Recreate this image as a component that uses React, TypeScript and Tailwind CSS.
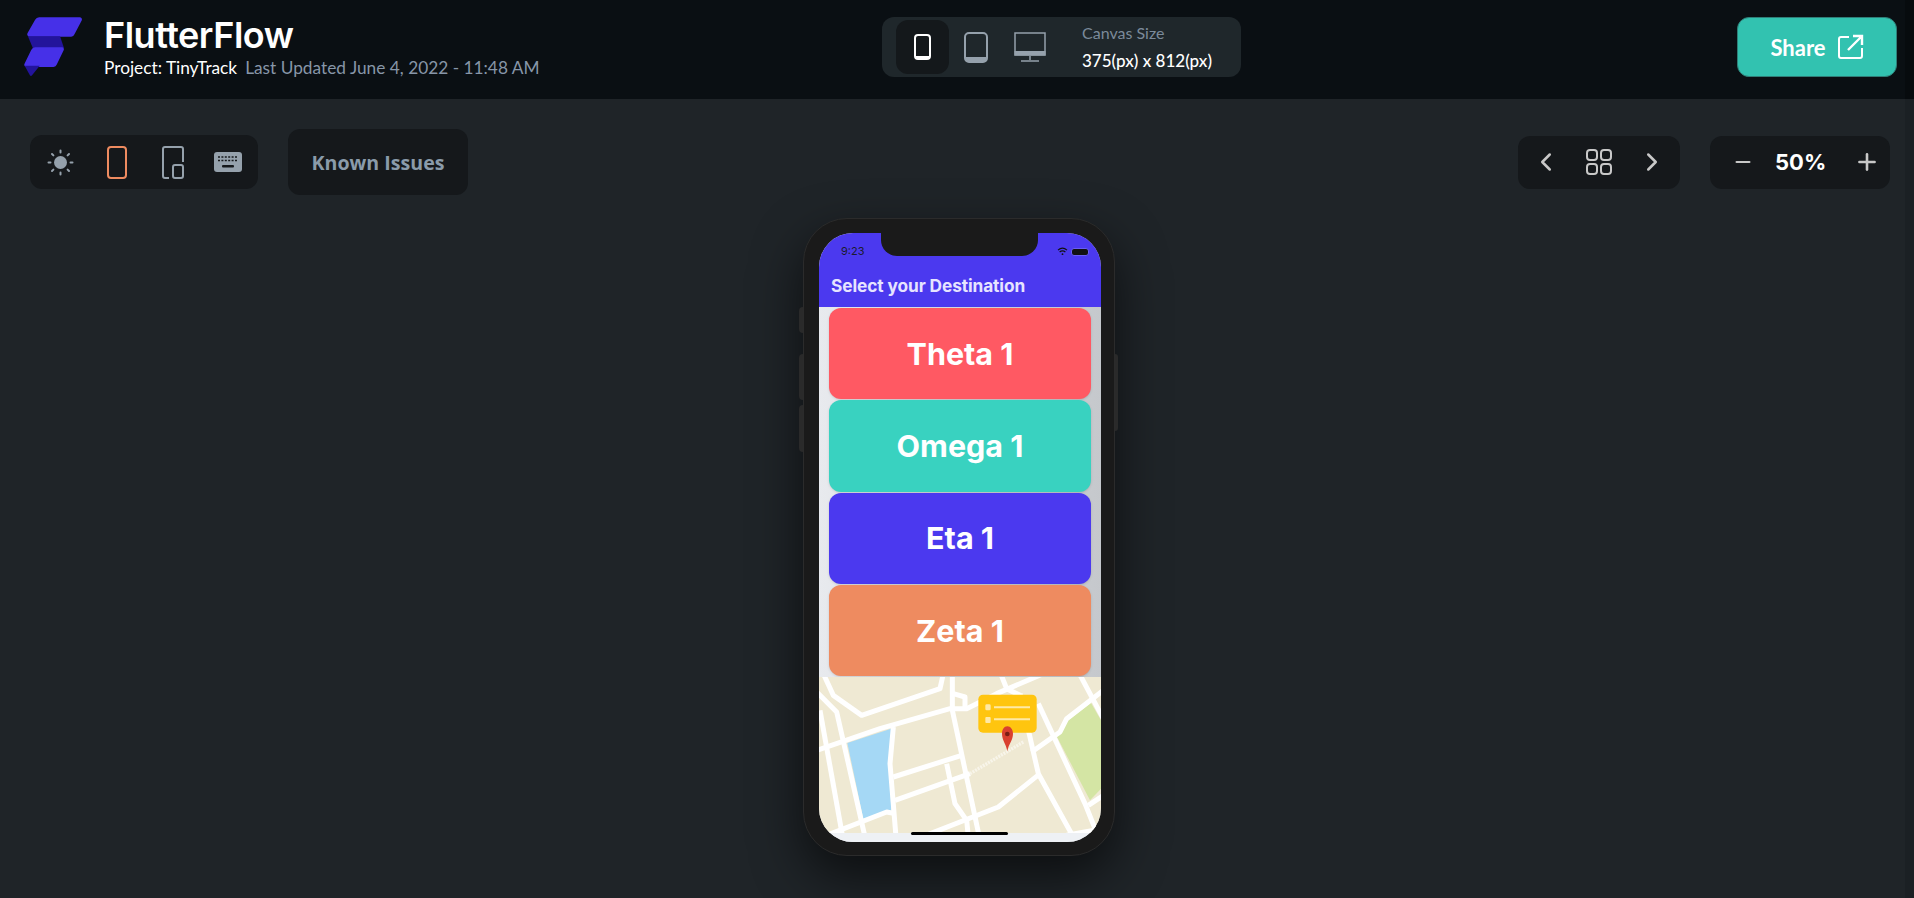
import { ChevronLeft, ChevronRight, Minus, Plus } from 'lucide-react';

const cards = [
  { label: 'Theta 1', bg: 'bg-[#ff5963]' },
  { label: 'Omega 1', bg: 'bg-[#39d2c0]' },
  { label: 'Eta 1', bg: 'bg-[#4b39ef]' },
  { label: 'Zeta 1', bg: 'bg-[#ee8b60]' },
];

// road centre lines, in the coordinates of the map drawing
const roads = [
  'M100 40 L130 105 L215 165 L450 85 L460 40',
  'M80 95 L140 155 L225 530',
  'M90 150 L158 530',
  'M80 270 L270 205 L480 145 L530 145 L620 100 L760 40',
  'M487 40 L487 150 L568 530',
  'M490 100 L525 110 L525 145',
  'M632 40 L650 85 L690 105',
  'M690 100 L745 340 L850 530',
  'M745 130 L885 430 L925 530',
  'M868 40 L940 175',
  'M725 275 L810 215 L830 175 L940 90',
  'M310 350 L515 285',
  'M315 420 L540 340',
  'M470 310 L495 430 L530 480 L535 530',
  'M395 530 L625 440 L750 340',
  'M110 525 L290 455 L315 460',
  'M310 200 L300 310 L318 530',
  'M895 435 L940 405',
  'M830 525 L940 505',
];

function Logo() {
  return (
    <svg width="60" height="62" viewBox="65 45 183 188">
      <path d="M116 48 H238 a7 7 0 0 1 6 10 L222 100 a12 12 0 0 1 -10 8 H86 a8 8 0 0 1 -7 -12 L102 56 a14 14 0 0 1 14 -8 Z" fill="#4630e8" />
      <path d="M80 106 H178 L190 142 H95 Z" fill="#23149c" />
      <path d="M104 140 H184 a6 6 0 0 1 5 9 L168 192 a12 12 0 0 1 -10 8 H76 a7 7 0 0 1 -6 -11 L90 148 a14 14 0 0 1 14 -8 Z" fill="#4630e8" />
      <path d="M70 196 H116 L92 226 a4 4 0 0 1 -6 -1 Z" fill="#23149c" />
    </svg>
  );
}

function MapView() {
  return (
    <svg viewBox="87 50 846 468" className="block h-[156px] w-[282px]">
      <rect x="87" y="50" width="846" height="468" fill="#efe9d3" />
      <path d="M172 248 L310 203 L298 310 L304 450 L220 476 Z" fill="#a5d8f5" />
      <path d="M800 228 L835 180 L903 128 L933 180 L933 385 L900 420 Z" fill="#d4e5a4" />
      {roads.map(d => (
        <path key={d} d={d} fill="none" stroke="#fff" strokeWidth="15" strokeLinejoin="round" />
      ))}
      <path d="M540 340 L700 245" fill="none" stroke="#f8f5ea" strokeWidth="10" strokeDasharray="6 3" />
      <rect x="565" y="103" width="175" height="114" rx="14" fill="#ffc50f" />
      <rect x="586" y="132" width="16" height="18" rx="4" fill="#ffe9a6" />
      <rect x="586" y="170" width="16" height="18" rx="3" fill="#ffe9a6" />
      <path d="M612 141 H720 M612 177 H720" stroke="#ffe9a6" strokeWidth="6" />
      <path d="M652 198 C642 198 636 208 636 220 C636 240 648 250 652 273 C656 250 669 240 669 220 C669 208 662 198 652 198 Z" fill="#d9402f" />
      <circle cx="652" cy="221" r="7" fill="#7a1d14" />
    </svg>
  );
}

function Phone() {
  return (
    <div className="relative ml-[803px] mt-[23px] h-[638px] w-[312px] rounded-[44px] border border-[#2b2b2b] bg-[#1a1a1a] py-[14px] pl-[15px] shadow-[0_20px_50px_rgba(0,0,0,0.6)]">
      <div className="absolute left-[-5px] top-[88px] h-[26px] w-[4px] rounded-l bg-[#2a2a2a]" />
      <div className="absolute left-[-5px] top-[135px] h-[46px] w-[4px] rounded-l bg-[#2a2a2a]" />
      <div className="absolute left-[-5px] top-[186px] h-[47px] w-[4px] rounded-l bg-[#2a2a2a]" />
      <div className="absolute right-[-4px] top-[135px] h-[77px] w-[3px] rounded-r bg-[#2a2a2a]" />

      <div className="relative flex h-[609px] w-[282px] flex-col overflow-hidden rounded-[34px] bg-linear-to-r from-[#e8eaee] to-[#c5c8cc]">
        {/* notch lies over the status bar */}
        <div className="absolute left-[62px] top-0 h-[23px] w-[157px] rounded-b-[16px] bg-[#1a1a1a]" />

        <div className="flex h-[74px] shrink-0 flex-col bg-[#4b39ef] px-[12px]">
          <div className="flex h-[33px] items-center justify-between pl-[10px] pr-0 pt-[4px]">
            <span className="font-['Inter',sans-serif] text-[11px] text-[#1c1c2e]">9:23</span>
            <div className="flex items-center gap-[3px]">
              <svg width="11" height="9" viewBox="0 0 12 10" fill="none" stroke="#111" strokeWidth="1.4">
                <path d="M1 3.5 C4 .8 8 .8 11 3.5 M2.8 5.6 C4.8 4 7.2 4 9.2 5.6" />
                <circle cx="6" cy="8" r="1" fill="#111" stroke="none" />
              </svg>
              <div className="h-[8px] w-[18px] rounded-[3px] border border-[#6a5cf5] bg-[#111]" />
            </div>
          </div>
          <h1 className="mt-[8px] font-['Inter',sans-serif] text-[17.3px] font-bold leading-[24px] tracking-[-0.1px] text-[#e6e4ff]">
            Select your Destination
          </h1>
        </div>

        <div className="flex flex-col gap-[1px] px-[10px] pt-[1px]">
          {cards.map(card => (
            <div
              key={card.label}
              className={`flex h-[91.25px] items-center justify-center rounded-[12px] font-['Inter',sans-serif] text-[30.5px] font-bold text-white shadow-sm ${card.bg}`}
            >
              {card.label}
            </div>
          ))}
        </div>

        <div className="mt-[1px]">
          <MapView />
        </div>
        <div className="flex-1 bg-[#eef1f5]" />
        <div className="absolute bottom-[7px] left-[92px] h-[3px] w-[97px] rounded-full bg-black" />
      </div>
    </div>
  );
}

export default function App() {
  return (
    <div className="flex h-screen overflow-hidden bg-[#1f2428] font-['Lato',sans-serif]">
      <div className="min-w-0 flex-1">
        <header className="flex h-[99px] items-center bg-[#0a0f13] pb-[5px]">
          <div className="flex w-[882px] shrink-0 items-center pl-[23px]">
            <Logo />
            <div className="ml-[21px] flex flex-col">
              <div className="font-['Inter',sans-serif] text-[36px] font-semibold leading-[38px] tracking-[-0.5px] text-white">
                FlutterFlow
              </div>
              <div className="mt-[3px] flex gap-[8px] text-[17.3px] leading-[22px]">
                <span className="text-white">Project: TinyTrack</span>
                <span className="text-[#8796a8]">Last Updated June 4, 2022 - 11:48 AM</span>
              </div>
            </div>
          </div>

          <div className="flex h-[60px] w-[359px] shrink-0 items-center rounded-[12px] bg-[#1f272b] pl-[14px]">
            <div className="flex h-[54px] w-[53px] items-center justify-center rounded-[12px] bg-[#14181b]">
              <div className="h-[26px] w-[17px] rounded-[4px] border-2 border-b-[4px] border-white" />
            </div>
            <div className="ml-[15px] h-[31px] w-[24px] rounded-[5px] border-2 border-b-[6px] border-[#95a1ac]" />
            <svg className="ml-[26px]" width="32" height="30" viewBox="0 0 32 30" fill="none">
              <rect x="1" y="1" width="30" height="22" stroke="#95a1ac" strokeWidth="1.5" />
              <rect x="0.5" y="19" width="31" height="4.5" fill="#95a1ac" />
              <path d="M16 24 V28 M7 29 H25" stroke="#95a1ac" strokeWidth="1.5" />
            </svg>
            <div className="ml-[36px] flex flex-col">
              <span className="text-[16px] leading-[24px] text-[#7b8a9a]">Canvas Size</span>
              <span className="mt-[4px] text-[17px] font-medium leading-[24px] text-white">375(px) x 812(px)</span>
            </div>
          </div>

          <button className="ml-auto mr-[8px] flex h-[60px] w-[160px] items-center justify-center gap-[12px] rounded-[12px] border border-[#2f7f78] bg-[#32c2b0] text-[22px] font-bold text-white">
            Share
            <svg width="26" height="26" viewBox="0 0 26 26" fill="none" stroke="#fff" strokeWidth="2">
              <path d="M11 3 H3 a2 2 0 0 0 -2 2 V22 a2 2 0 0 0 2 2 H22 a2 2 0 0 0 2 -2 V14" />
              <path d="M10 16 L23 3 M15 2 H24 V11" strokeWidth="2.4" />
            </svg>
          </button>
        </header>

        <div className="flex items-center pl-[30px] pr-[15px] pt-[30px]">
          <div className="flex h-[54px] w-[228px] items-center rounded-[12px] bg-[#15181b] pl-[17px]">
            <svg width="27" height="27" viewBox="0 0 27 27" fill="#95a1ac" stroke="#95a1ac" strokeWidth="2" strokeLinecap="round">
              <circle cx="13.5" cy="13.5" r="6.5" stroke="none" />
              <path d="M13.5 1.5 V3.5 M13.5 23.5 V25.5 M1.5 13.5 H3.5 M23.5 13.5 H25.5 M5 5 L6.4 6.4 M20.6 20.6 L22 22 M5 22 L6.4 20.6 M20.6 6.4 L22 5" />
            </svg>
            <div className="ml-[33px] h-[33px] w-[20px] rounded-[4px] border-2 border-[#ee8b60]" />
            <svg className="ml-[35px]" width="22" height="33" viewBox="0 0 22 33" fill="none" stroke="#95a1ac" strokeWidth="2">
              <path d="M7 32 H3 a2 2 0 0 1 -2 -2 V3 a2 2 0 0 1 2 -2 H19 a2 2 0 0 1 2 2 V16" />
              <rect x="11" y="19" width="10" height="13" rx="2" />
            </svg>
            <svg className="ml-[30px]" width="28" height="20" viewBox="0 0 28 20">
              <rect width="28" height="20" rx="3" fill="#95a1ac" />
              <path d="M4 5 H24 M4 8.5 H24" stroke="#15181b" strokeWidth="1.6" strokeDasharray="2 1.4" />
              <rect x="8" y="13" width="12" height="2.4" rx="1" fill="#15181b" />
            </svg>
          </div>

          <div className="ml-[30px] flex h-[66px] w-[180px] items-center justify-center rounded-[12px] bg-[#15181b] pt-[2px] font-['Open_Sans',sans-serif] text-[19.6px] font-bold text-[#8a9baa]">
            Known Issues
          </div>

          <div className="ml-auto flex h-[53px] w-[162px] items-center justify-between rounded-[12px] bg-[#15181b] px-[13px]">
            <ChevronLeft size={30} color="#c8c8c8" strokeWidth={2} />
            <div className="grid grid-cols-2 gap-[2px]">
              <div className="h-[12px] w-[12px] rounded-[4px] border-2 border-[#c8c8c8]" />
              <div className="h-[12px] w-[12px] rounded-[4px] border-2 border-[#c8c8c8]" />
              <div className="h-[12px] w-[12px] rounded-[4px] border-2 border-[#c8c8c8]" />
              <div className="h-[12px] w-[12px] rounded-[4px] border-2 border-[#c8c8c8]" />
            </div>
            <ChevronRight size={30} color="#c8c8c8" strokeWidth={2} />
          </div>

          <div className="ml-[30px] flex h-[53px] w-[180px] items-center rounded-[12px] bg-[#15181b] pl-[22px] pr-[10px]">
            <Minus size={22} color="#c8c8c8" strokeWidth={2.4} />
            <span className="ml-[21px] font-['Inter',sans-serif] text-[22px] font-bold text-white">50%</span>
            <Plus className="ml-auto" size={26} color="#c8c8c8" strokeWidth={2.4} />
          </div>
        </div>

        <Phone />
      </div>
      {/* scrollbar track, a shade darker than the page */}
      <div className="flex w-[9px] shrink-0 flex-col">
        <div className="h-[99px] bg-[#070b0e]" />
        <div className="flex-1 bg-[#1b2024]" />
      </div>
    </div>
  );
}
